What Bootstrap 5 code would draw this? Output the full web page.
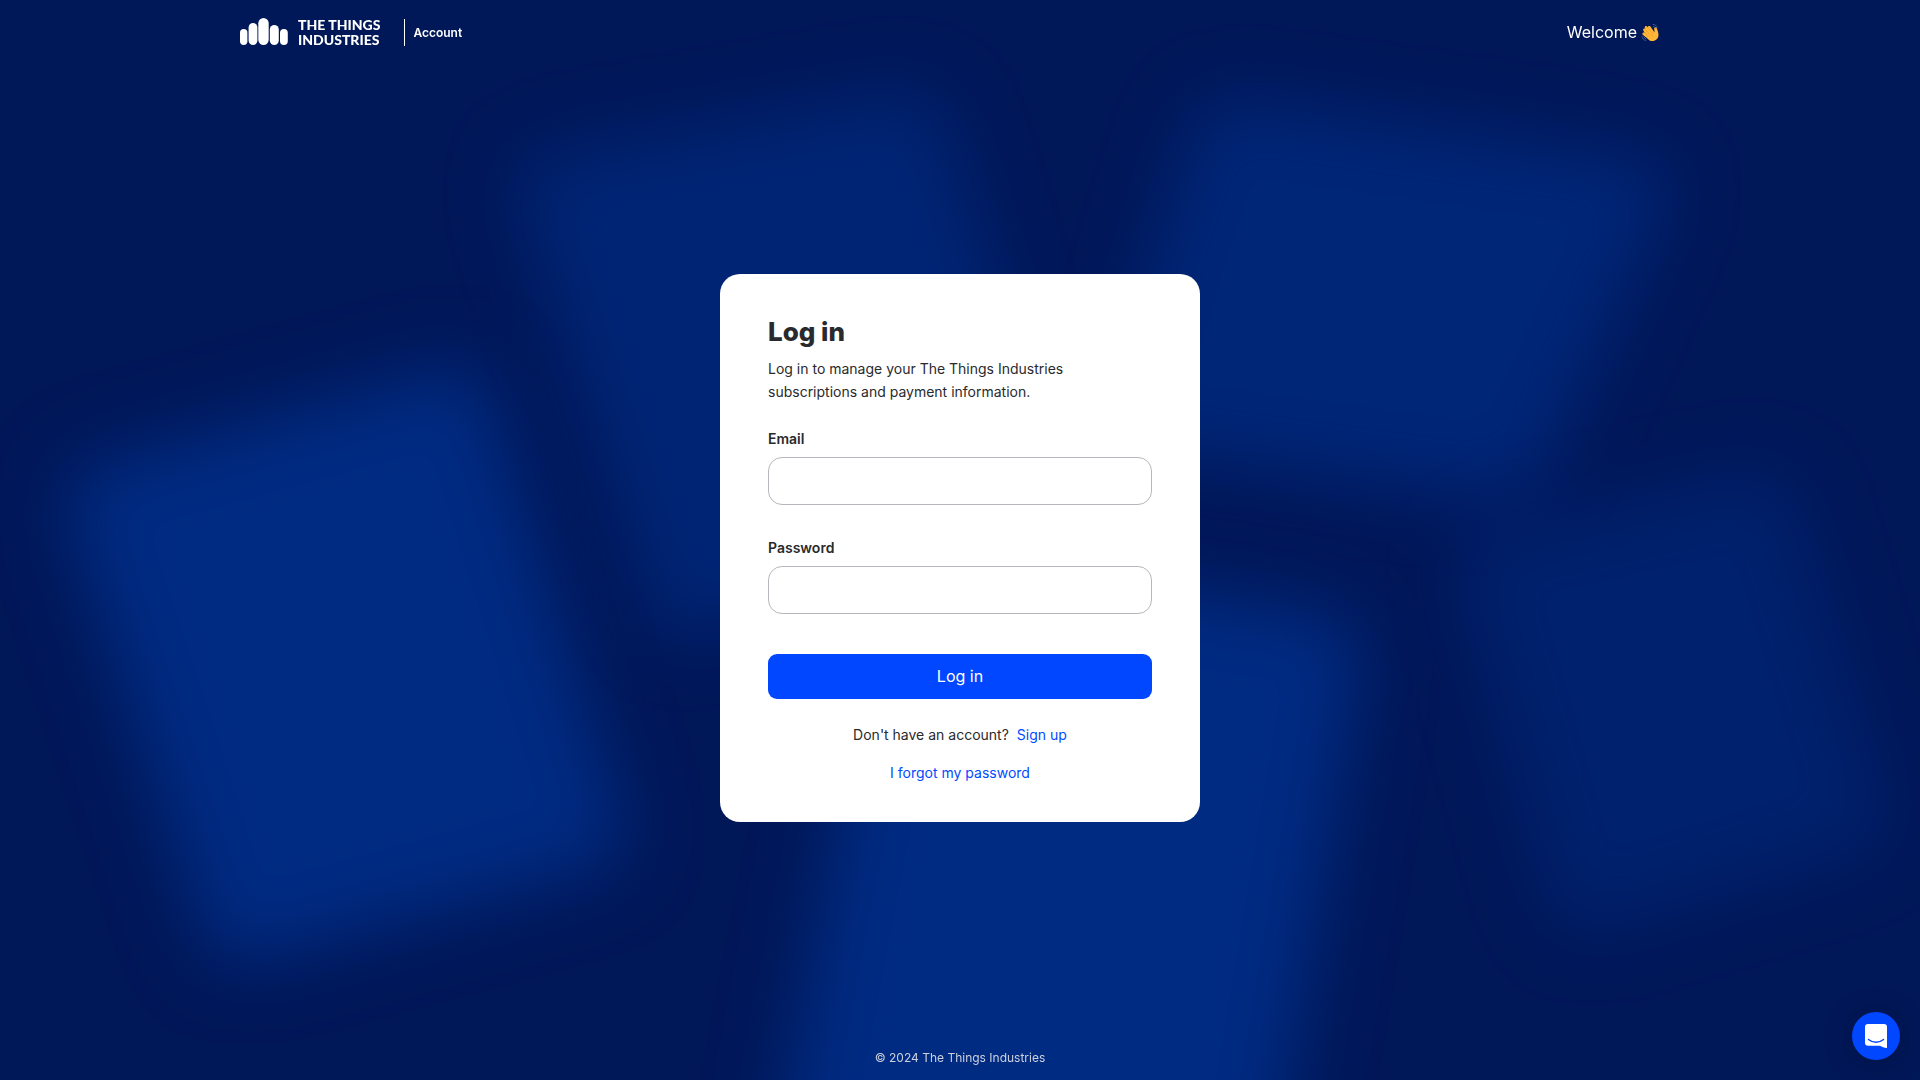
<!DOCTYPE html>
<html lang="en">
<head>
<meta charset="utf-8">
<meta name="viewport" content="width=device-width, initial-scale=1">
<title>Log in - The Things Industries</title>
<link href="https://cdn.jsdelivr.net/npm/bootstrap@5.3.0/dist/css/bootstrap.min.css" rel="stylesheet">
<style>
  body { font-family: Inter, "Liberation Sans", sans-serif; background: #001758; color: #292a2d; font-size: 14px; line-height: 24px; }
  a { color: #004bff; text-decoration: none; }
  a:hover { text-decoration: underline; }
  .backdrop { position: fixed; inset: 0; width: 100%; height: 100%; z-index: -1; }
  .site-bar { max-width: 1464px; height: 64px; }
  .brand-name { font-family: Lato, sans-serif; font-weight: 900; font-size: 14px; line-height: 15px; color: #fff; margin-left: 10px; }
  .brand-section { font-size: 12px; font-weight: 600; line-height: 27px; color: #fff; border-left: 1px solid #fff; padding-left: 8px; margin-left: 24px; }
  .greeting { font-size: 16px; color: #fff; padding-right: 20px; }
  .login-card { width: 480px; border: 0; border-radius: 20px; padding: 42px 48px 37px; color: inherit; }
  .login-title { font-weight: 800; font-size: 26px; line-height: 32px; margin-bottom: 9px; }
  .intro { line-height: 23px; margin-bottom: 26px; }
  .field-label { font-weight: 600; line-height: 20px; margin-bottom: 8px; }
  .field-input { height: 48px; border: 1px solid #b6b6bd; border-radius: 14px; }
  .field-input + .field-label { margin-top: 33px; }
  .submit-btn { height: 45px; margin-top: 40px; padding: 4px 12px 6px; border: 0; border-radius: 9px; background: #0047ff; font-size: 16px; }
  .forgot { margin-top: 14px; }
  .site-foot { font-size: 12px; line-height: 18px; padding: 17px 0 13px; color: #ccd0dd; }
  .chat-btn { right: 20px; bottom: 20px; width: 48px; height: 48px; background: #0047ff; box-shadow: 0 1px 6px rgba(0,0,0,.1), 0 2px 32px rgba(0,0,0,.2); }
  .chat-btn:hover { background: #003ad1; }
</style>
</head>
<body class="d-flex flex-column min-vh-100">
<svg class="backdrop" viewBox="0 0 1920 1080" preserveAspectRatio="xMidYMid slice" aria-hidden="true">
  <defs>
    <filter id="soft" x="-40%" y="-40%" width="180%" height="180%" color-interpolation-filters="sRGB"><feGaussianBlur stdDeviation="36"/></filter>
  </defs>
  <rect width="1920" height="1080" fill="#001758"/>
  <g fill="#002b82" stroke-linejoin="round">
    <path filter="url(#soft)" d="M100 462 L445 368 Q480 358 490 395 L622 820 Q632 860 595 870 L260 960 Q215 972 202 930 L70 525 Q55 475 100 462 Z"/>
    <path filter="url(#soft)" opacity=".68" d="M545 153 L895 92 Q935 85 948 120 L1080 560 L660 640 L520 210 Q505 160 545 153 Z"/>
    <path filter="url(#soft)" opacity=".75" d="M1240 100 L1630 155 Q1685 163 1665 205 L1550 460 Q1530 505 1485 498 L1130 450 Q1088 443 1105 405 L1190 130 Q1200 95 1240 100 Z"/>
    <path filter="url(#soft)" d="M890 545 L1320 612 Q1365 620 1360 665 L1270 1200 L765 1200 Z"/>
    <path filter="url(#soft)" opacity=".5" d="M1490 530 L1750 473 Q1785 465 1795 500 L1885 810 Q1893 845 1855 855 L1600 930 Q1560 940 1550 905 L1460 575 Q1450 540 1490 530 Z"/>
  </g>
</svg>

<header class="container-fluid site-bar d-flex align-items-center justify-content-between">
  <a href="#" class="d-flex align-items-center" aria-label="The Things Industries Account">
    <svg width="48" height="28" viewBox="0 0 48 28" fill="#fff" aria-hidden="true">
      <rect x="0" y="11" width="7.4" height="16" rx="3.7"/>
      <rect x="8.6" y="5" width="8.800" height="22" rx="4.4"/>
      <rect x="18.3" y="0" width="10.400" height="27" rx="5.2"/>
      <rect x="29.8" y="7" width="9" height="20" rx="4.5"/>
      <rect x="40" y="11" width="7.800" height="16" rx="3.9"/>
    </svg>
    <span class="brand-name">THE THINGS<br>INDUSTRIES</span>
    <span class="brand-section">Account</span>
  </a>
  <div class="greeting d-flex align-items-center gap-1">
    <span>Welcome</span>
    <svg width="19" height="19" viewBox="0 0 36 36" role="img" aria-label="Waving hand">
      <path fill="#ef9645" d="M4.900 11.300c1-.7 2.600-.6 3.600.8l4.500 6.300L5.800 13.600z"/>
      <path fill="#ffb636" d="M3.500 18.300c1.100-.9 2.500-.6 3.500.6L4.700 14.800c-1-1.500-.6-3 .6-3.800 1.200-.7 2.600-.4 3.600 1l1 1.400-2.300-3.500c-1-1.500-.7-3.100.6-3.900 1.300-.8 2.900-.5 3.900 1l1.500 2.100c-.7-1.300-.4-2.600.8-3.300 1.200-.7 2.600-.3 3.500 1l7.400 10.700c.5-2-.1-4.200-.4-5.900-.3-1.900.4-3.300 1.800-3.700 1.600-.5 2.900.5 3.500 2.700 1 3.700 3 7.700 2.900 12-.1 5.900-4.300 10.600-9.900 11.500-5 .8-8.700-1.600-12-5.800L3.200 22.200c-.9-1.400-.8-3 .3-3.900z"/>
      <path fill="none" stroke="#e8962a" stroke-width="1" stroke-linecap="round" d="M7.200 19l6.500 7M9.800 13.500l7.400 9.200M13.500 9.500l7.400 10M24.500 18c-3 1.600-4 4.500-2.600 7.500"/>
      <path fill="none" stroke="#43608f" stroke-width="1.800" stroke-linecap="round" d="M2 26c.6 3.500 3.300 6.300 6.800 7M5.800 26.500c.6 1.700 1.800 2.900 3.500 3.500M23 2.500c3.500.2 6.500 2.600 7.400 6M23.500 6.300c1.700.3 3 1.400 3.600 3"/>
    </svg>
  </div>
</header>

<main class="flex-grow-1 d-flex align-items-center justify-content-center">
  <div class="card login-card">
    <h1 class="login-title">Log in</h1>
    <p class="intro">Log in to manage your The Things Industries subscriptions and payment information.</p>
    <form>
      <label class="d-block field-label" for="email">Email</label>
      <input class="form-control field-input" type="email" id="email">
      <label class="d-block field-label" for="password">Password</label>
      <input class="form-control field-input" type="password" id="password">
      <button class="btn btn-primary submit-btn w-100" type="submit">Log in</button>
    </form>
    <div class="d-flex justify-content-center gap-2 mt-4"><span>Don't have an account?</span><a href="#">Sign up</a></div>
    <div class="text-center forgot"><a href="#">I forgot my password</a></div>
  </div>
</main>

<footer class="site-foot text-center">© 2024 The Things Industries</footer>

<button class="chat-btn btn rounded-circle position-fixed d-flex align-items-center justify-content-center p-0" type="button" aria-label="Open chat">
  <svg width="22" height="24" viewBox="0 0 22 24" aria-hidden="true">
    <path fill="#fff" d="M3 0h16a3 3 0 0 1 3 3v21c-3-.3-5-1.300-7-2.300H3a3 3 0 0 1-3-3V3a3 3 0 0 1 3-3z"/>
    <path fill="none" stroke="#0047ff" stroke-width="1.500" stroke-linecap="round" d="M3.500 15.500c4.500 3.700 10.500 3.700 15 0"/>
  </svg>
</button>
<script src="https://cdn.jsdelivr.net/npm/bootstrap@5.3.0/dist/js/bootstrap.bundle.min.js"></script>
</body>
</html>
